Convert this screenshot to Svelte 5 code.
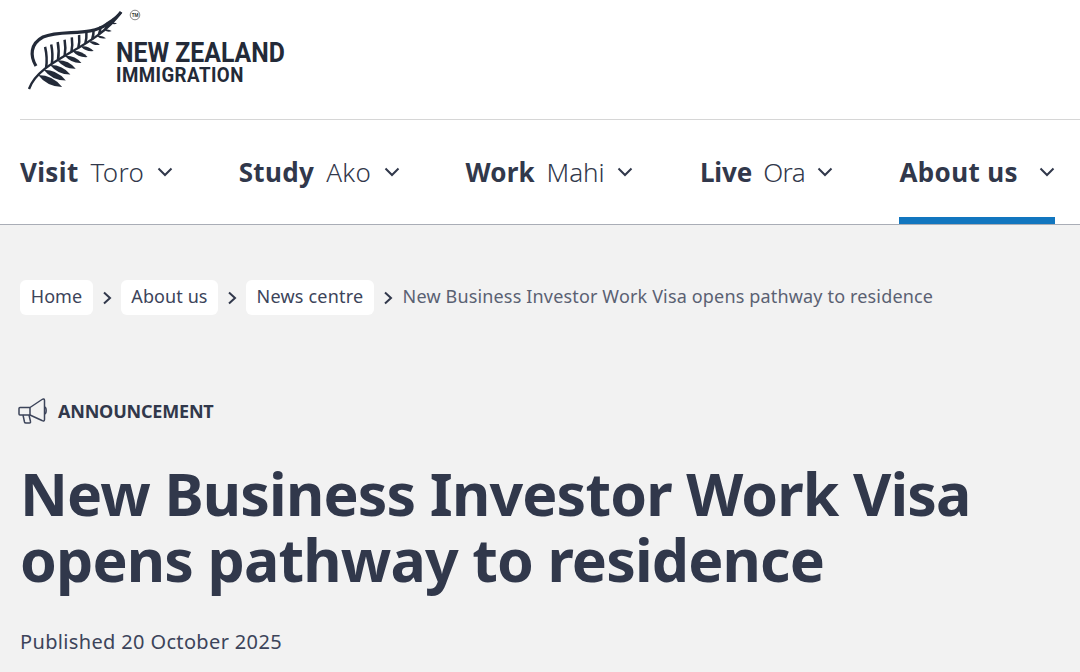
<script>
  const nav = [
    { b: 'Visit', l: 'Toro' },
    { b: 'Study', l: 'Ako' },
    { b: 'Work', l: 'Mahi' },
    { b: 'Live', l: 'Ora' }
  ];
  const crumbs = ['Home', 'About us', 'News centre'];

  const P = [[29, 89], [40, 58], [95, 50], [121, 12]];
  function stem(t) {
    const u = 1 - t;
    const f = (i) => u*u*u*P[0][i] + 3*u*u*t*P[1][i] + 3*u*t*t*P[2][i] + t*t*t*P[3][i];
    return [f(0), f(1)];
  }
  function leaf(x1, y1, x2, y2, w) {
    const mx = (x1 + x2) / 2, my = (y1 + y2) / 2;
    const dx = x2 - x1, dy = y2 - y1;
    const len = Math.hypot(dx, dy) || 1;
    const nx = -dy / len * w, ny = dx / len * w;
    return `M${x1.toFixed(1)} ${y1.toFixed(1)}Q${(mx + nx).toFixed(1)} ${(my + ny).toFixed(1)} ${x2.toFixed(1)} ${y2.toFixed(1)}Q${(mx - nx).toFixed(1)} ${(my - ny).toFixed(1)} ${x1.toFixed(1)} ${y1.toFixed(1)}Z`;
  }
  const lower = [];
  for (let i = 0; i < 11; i++) {
    const t = 0.17 + i * 0.072;
    const [x, y] = stem(t);
    const s = 1 - i / 13;
    lower.push(leaf(x, y, x + 24 * s, y + 12 * s - i * 0.3, 6.5 * s));
  }
  const upper = [];
  for (let i = 0; i < 11; i++) {
    const t = 0.27 + i * 0.062;
    const [x, y] = stem(t);
    const s = 1 - i / 13;
    upper.push(`M${x.toFixed(1)} ${y.toFixed(1)}Q${(x + 1.5).toFixed(1)} ${(y - 10 * s).toFixed(1)} ${(x - 1 + i * 0.35).toFixed(1)} ${(y - 21 * s).toFixed(1)}`);
  }
</script>

<div class="page">
  <header class="top">
    <div class="logo">
      <svg class="fern" viewBox="0 0 145 95" width="145" height="95" aria-hidden="true">
        <path class="stem" d="M29 89C40 58 95 50 121 12" />
        <path class="arc" d="M36 66C30 56 30 44 43 37C62 29 90 37 107 24C113 20 118 17 121 12" />
        {#each upper as d}<path class="rib" d={d} />{/each}
        {#each lower as d}<path class="blade" d={d} />{/each}
        <circle class="tm" cx="135" cy="15" r="4.800" />
        <text class="tmt" x="135" y="16.600">TM</text>
      </svg>
      <div class="wordmark">
        <span class="w1">NEW ZEALAND</span>
        <span class="w2">IMMIGRATION</span>
      </div>
    </div>
  </header>

  <nav class="nav">
    {#each nav as item}
      <a class="item" href="#top">
        <b>{item.b}</b><span class="light">{item.l}</span>
        <svg class="chev" viewBox="0 0 16 10" width="16" height="10" aria-hidden="true"><path d="M1.500 1.500L8 8l6.500-6.500" /></svg>
      </a>
    {/each}
    <a class="item active" href="#top">
      <b>About us</b>
      <svg class="chev wide" viewBox="0 0 16 10" width="16" height="10" aria-hidden="true"><path d="M1.500 1.500L8 8l6.500-6.500" /></svg>
    </a>
  </nav>

  <main class="content">
    <ol class="crumbs">
      {#each crumbs as c}
        <li class="crumb"><a href="#top">{c}</a></li>
        <li class="sep"><svg viewBox="0 0 10 14" width="10" height="14" aria-hidden="true"><path d="M2 1.500L8 7l-6 5.500" /></svg></li>
      {/each}
      <li class="current">New Business Investor Work Visa opens pathway to residence</li>
    </ol>

    <div class="tag">
      <svg class="horn" viewBox="0 0 30 30" width="30" height="30" aria-hidden="true">
        <path d="M2 11.500h10L24 3.500c1.500-1 2.500-.5 2.500 1v19c0 1.500-1 2-2.500 1L12 19H2c-.6 0-1-.4-1-1v-5.500c0-.6.4-1 1-1z" />
        <path d="M12 11.500V19M26.500 11c2.200.5 2.200 6.500 0 7M5 19l1.500 7c.2.800.8 1 1.500 1h3.500c1 0 1.200-.8 1-1.500L11 19" />
      </svg>
      <span>ANNOUNCEMENT</span>
    </div>

    <h1>New Business Investor Work Visa opens pathway to residence</h1>
    <p class="pub">Published 20 October 2025</p>
  </main>
</div>

<style>
  :global(body) {
    margin: 0;
    background: #f2f2f2;
  }
  .page {
    width: 1080px;
    height: 672px;
    overflow: hidden;
    font-family: "Noto Sans", "Open Sans", sans-serif;
    color: #31384b;
    background: #f2f2f2;
  }
  .top {
    height: 120px;
    background: #fff;
    padding-left: 20px;
    box-sizing: border-box;
  }
  .logo {
    position: relative;
    height: 119px;
    border-bottom: 1px solid #d6d6d6;
  }
  .fern {
    position: absolute;
    left: -20px;
    top: 0;
  }
  .stem { fill: none; stroke: #232a38; stroke-width: 2.400; }
  .arc { fill: none; stroke: #232a38; stroke-width: 3.200; }
  .rib { fill: none; stroke: #232a38; stroke-width: 2.500; }
  .blade { fill: #232a38; }
  .tm { fill: none; stroke: #666; stroke-width: 0.800; }
  .tmt { font: 700 4.500px "Roboto", sans-serif; fill: #333; text-anchor: middle; }
  .wordmark {
    position: absolute;
    left: 96px;
    top: 39px;
    display: flex;
    flex-direction: column;
    font-family: "Roboto", sans-serif;
    font-weight: 700;
    color: #232a38;
    line-height: 1;
  }
  .w1 { font-size: 28px; height: 26px; letter-spacing: 0; transform: scaleX(0.885); transform-origin: 0 0; white-space: nowrap; }
  .w2 { font-size: 21px; height: 20px; letter-spacing: 0.5px; transform: scaleX(0.89); transform-origin: 0 0; white-space: nowrap; }
  .nav {
    height: 105px;
    box-sizing: border-box;
    background: #fff;
    border-bottom: 1px solid #a9adb6;
    display: flex;
    padding-left: 20px;
    gap: 66px;
  }
  .item {
    position: relative;
    display: flex;
    align-items: center;
    color: inherit;
    text-decoration: none;
    font-size: 26px;
    height: 104px;
    white-space: nowrap;
  }
  .item b { font-weight: 700; letter-spacing: 0.35px; }
  .light { font-weight: 300; margin-left: 12px; letter-spacing: 0.3px; }
  .item:nth-child(3) b { letter-spacing: 0.1px; }
  .item:nth-child(3) .light { letter-spacing: -0.1px; }
  .item:nth-child(4) { margin-left: 1px; }
  .item:nth-child(4) b { letter-spacing: -0.1px; }
  .item:nth-child(4) .light { margin-left: 11px; letter-spacing: -0.6px; }
  .chev { margin-left: 12.500px; fill: none; stroke: #31384b; stroke-width: 2; }
  .chev.wide { margin-left: 21.500px; }
  .active::after {
    content: "";
    position: absolute;
    left: 0;
    right: 0;
    bottom: 0;
    height: 7px;
    background: #1276bf;
  }
  .content { padding: 55px 20px 0; }
  .crumbs {
    list-style: none;
    margin: 0;
    padding: 0;
    display: flex;
    align-items: center;
    height: 35px;
    font-size: 18px;
    white-space: nowrap;
  }
  .crumb a {
    display: block;
    background: #fff;
    border-radius: 6px;
    padding: 0 10.700px 2px;
    line-height: 33px;
    color: #3c445a;
    text-decoration: none;
    letter-spacing: 0.1px;
  }
  .crumb:nth-child(5) a { letter-spacing: 0.2px; }
  .sep { display: flex; margin: 0 8.800px; }
  .sep path { fill: none; stroke: #31384b; stroke-width: 2; }
  .current { color: #5a6172; letter-spacing: 0.16px; padding: 0 0 4px 1px; }
  .tag {
    display: flex;
    align-items: center;
    margin-top: 81px;
    margin-left: -2px;
    gap: 10px;
    font-size: 18px;
    font-weight: 700;
    height: 30px;
    letter-spacing: -0.2px;
  }
  .horn path { fill: none; stroke: #3c445a; stroke-width: 1.500; stroke-linejoin: round; }
  h1 {
    margin: 34px 0 0;
    font-size: 59px;
    letter-spacing: -0.85px;
    line-height: 66px;
    font-weight: 700;
    width: 1000px;
  }
  .pub { margin: 36px 0 0; font-size: 20px; letter-spacing: 0.35px; line-height: 28px; color: #3c445a; }
</style>
